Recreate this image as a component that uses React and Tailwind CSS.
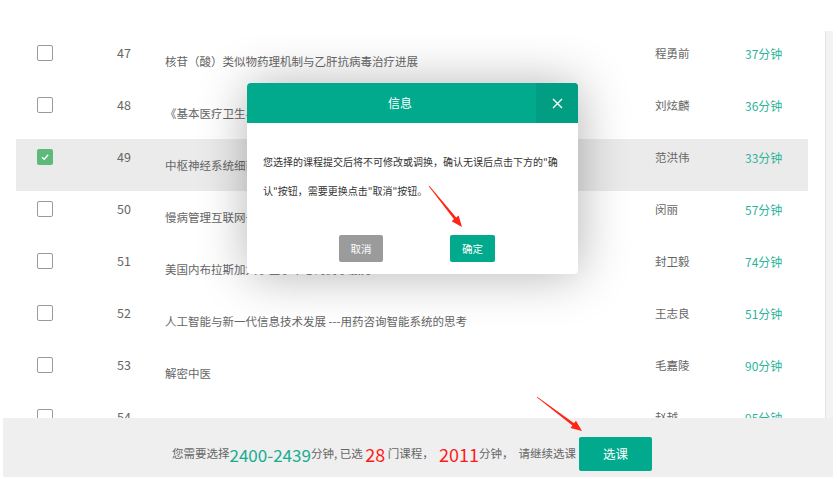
import React from "react";

const rows = [
  { no: 47, title: "核苷（酸）类似物药理机制与乙肝抗病毒治疗进展", name: "程勇前", time: "37分钟" },
  { no: 48, title: "《基本医疗卫生与健康促进法》解读", name: "刘炫麟", time: "36分钟" },
  { no: 49, title: "中枢神经系统细菌感染的诊断与治疗", name: "范洪伟", time: "33分钟", checked: true },
  { no: 50, title: "慢病管理互联网+药学服务模式探索", name: "闵丽", time: "57分钟" },
  { no: 51, title: "美国内布拉斯加大学医学中心的药学服务", name: "封卫毅", time: "74分钟" },
  { no: 52, title: "人工智能与新一代信息技术发展 ---用药咨询智能系统的思考", name: "王志良", time: "51分钟" },
  { no: 53, title: "解密中医", name: "毛嘉陵", time: "90分钟" },
  { no: 54, title: "临床药学与合理用药", name: "赵越", time: "95分钟" },
];

const font = { fontFamily: '"Noto Sans CJK SC", "Noto Sans", sans-serif' };

function Checkbox({ checked }) {
  if (checked) {
    return (
      <span className="flex h-[16px] w-[16px] items-center justify-center rounded-[2px] bg-[#5dba7a]">
        <svg width="10" height="10" viewBox="0 0 10 10" fill="none">
          <path d="M2 5.2 L4.2 7.3 L8.2 2.8" stroke="#fff" strokeWidth="1.3" />
        </svg>
      </span>
    );
  }
  return <span className="block h-[16px] w-[16px] rounded-[2px] border border-[#9a9a9a] bg-white" />;
}

function Arrow({ x1, y1, x2, y2 }) {
  const dx = x2 - x1;
  const dy = y2 - y1;
  const len = Math.hypot(dx, dy);
  const ux = dx / len;
  const uy = dy / len;
  const px = -uy;
  const py = ux;
  const hl = 11;
  const hw = 4.5;
  const bx = x2 - ux * hl;
  const by = y2 - uy * hl;
  const pts = [
    [x1 + px * 0.4, y1 + py * 0.4],
    [bx + px * 1.4, by + py * 1.4],
    [bx + px * hw, by + py * hw],
    [x2, y2],
    [bx - px * hw, by - py * hw],
    [bx - px * 1.4, by - py * 1.4],
    [x1 - px * 0.4, y1 - py * 0.4],
  ];
  return <polygon points={pts.map((p) => p.join(",")).join(" ")} fill="#ff2414" />;
}

export default function App() {
  return (
    <div className="relative h-[479px] w-[838px] overflow-hidden bg-white text-[#666]" style={font}>
      <div className="h-[31px]" />
      <div className="flex h-[387px]">
        {/* course list */}
        <div className="w-[825px] overflow-hidden pt-[4px]">
          {rows.map((r) => (
            <div
              key={r.no}
              className={`ml-[16px] grid h-[52px] w-[792px] grid-cols-[80px_48px_490px_90px_1fr] pl-[21px] ${
                r.checked ? "bg-[#ebebeb]" : ""
              }`}
            >
              <div className="pt-[10px]">
                <Checkbox checked={r.checked} />
              </div>
              <div className="pt-[9px] text-[12.5px] leading-[17px]">{r.no}</div>
              <div className="whitespace-nowrap pt-[18px] text-[11.5px] leading-[17px]">{r.title}</div>
              <div className="whitespace-nowrap pt-[10px] text-[11.5px] leading-[17px]">{r.name}</div>
              <div className="whitespace-nowrap pt-[10px] text-[12px] leading-[17px] text-[#2db59b]">{r.time}</div>
            </div>
          ))}
        </div>
        {/* scrollbar track */}
        <div className="w-[8px] border-l border-[#e4e4e4] bg-[#f3f3f3]" />
      </div>

      {/* bottom bar */}
      <div className="ml-[3px] h-[59px] w-[830px] bg-[#efefef] pl-[169px] pt-[19px] text-[11.5px]">
        <div className="flex h-[34px] items-center">
          <span>您需要选择</span>
          <span className="text-[17px] leading-none text-[#16ad91]">2400-2439</span>
          <span>分钟, 已选&nbsp;</span>
          <span className="text-[18px] leading-none text-[#ff1a1a]">28</span>
          <span>&nbsp;门课程，&nbsp;&nbsp;</span>
          <span className="text-[18px] leading-none text-[#ff1a1a]">2011</span>
          <span>分钟，&nbsp;&nbsp;请继续选课</span>
          <button className="ml-[3px] h-[34px] w-[73px] rounded-[2px] bg-[#01aa8d] text-[12.5px] text-white">选课</button>
        </div>
      </div>

      {/* dialog */}
      <div className="absolute left-[247px] top-[83px] w-[331px] overflow-hidden rounded-[4px] bg-white shadow-[1px_1px_50px_rgba(0,0,0,0.3)]">
        <div className="flex h-[40px] bg-[#01aa8d] text-white">
          <div className="flex-1 pl-[141px] text-[12px] leading-[40px]">信息</div>
          <button className="flex w-[42px] items-center justify-center bg-[#019e84]">
            <svg width="11" height="11" viewBox="0 0 11 11">
              <path d="M1 1 L10 10 M10 1 L1 10" stroke="#fff" strokeWidth="1.4" />
            </svg>
          </button>
        </div>
        <div className="px-[16px] pt-[24px] text-[10px] leading-[29px] text-[#333]">
          <div className="whitespace-nowrap">您选择的课程提交后将不可修改或调换，确认无误后点击下方的"确</div>
          <div className="whitespace-nowrap">认"按钮，需要更换点击"取消"按钮。</div>
        </div>
        <div className="flex gap-[67px] pb-[12px] pl-[92px] pt-[30px]">
          <button className="h-[27px] w-[44px] rounded-[2px] bg-[#9b9b9b] text-[10.5px] text-white">取消</button>
          <button className="h-[27px] w-[45px] rounded-[2px] bg-[#01aa8d] text-[10.5px] text-white">确定</button>
        </div>
      </div>

      {/* annotation arrows */}
      <svg className="pointer-events-none absolute left-0 top-0" width="838" height="479">
        <Arrow x1={429} y1={186} x2={462} y2={227} />
        <Arrow x1={537} y1={397} x2={582} y2={431} />
      </svg>
    </div>
  );
}
